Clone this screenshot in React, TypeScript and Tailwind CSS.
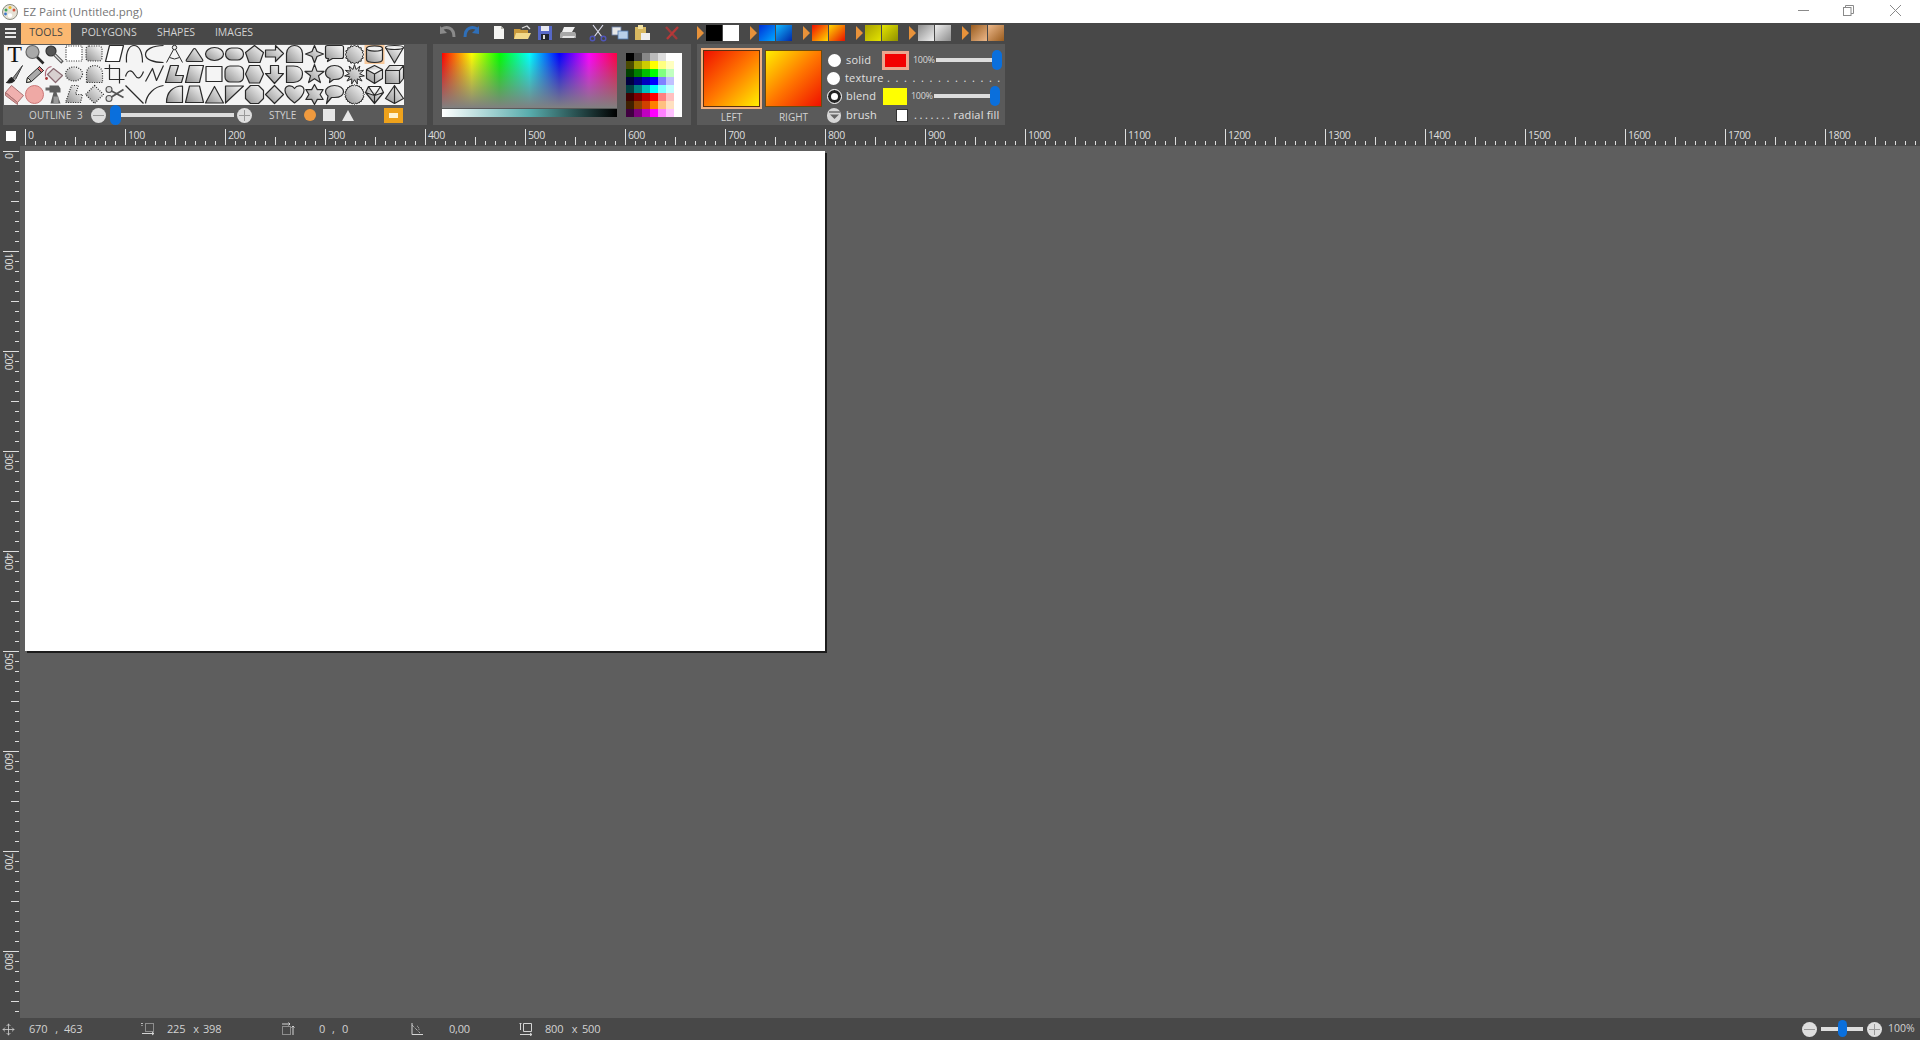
import type { ReactNode } from "react";
import { Move } from "lucide-react";

const star = (n: number, R: number, r: number) => {
  const pts: string[] = [];
  for (let i = 0; i < n * 2; i++) {
    const a = (Math.PI * i) / n - Math.PI / 2;
    const d = i % 2 ? r : R;
    pts.push(`${(10 + d * Math.cos(a)).toFixed(2)},${(10 + d * Math.sin(a)).toFixed(2)}`);
  }
  return pts.join(" ");
};

const G = "url(#sg)";

const P = ({ d, f = G, dash }: { d: string; f?: string; dash?: boolean }) => (
  <path d={d} fill={f} strokeDasharray={dash ? "1 1.4" : undefined} />
);

const shapes: ReactNode[] = [
  // row 1
  <text x="10" y="17.5" fontSize="24" textAnchor="middle" stroke="none" fill="#111" fontFamily="'Liberation Serif', serif">T</text>,
  <g><circle cx="8" cy="7.5" r="6.5" fill="#a9a9a9" stroke="#666" /><path d="M12.5 12.5 L19 19" strokeWidth="2.6" /></g>,
  <g><circle cx="6.5" cy="6.5" r="5" fill="#555" stroke="#333" /><path d="M9.5 9.5 L18 18" stroke="#555" strokeWidth="3.4" /><path d="M10.5 10.5 L17 17" stroke="#ddd" strokeWidth="1.2" /></g>,
  <rect x="1.5" y="1.5" width="16" height="15" fill="#fff" strokeDasharray="1 1.4" />,
  <rect x="1.5" y="1.5" width="16" height="15" rx="3" fill={G} strokeDasharray="1 1.4" />,
  <P d="M1 17 L5 1 H19 L15 17Z" f="#fff" />,
  <P d="M2 18 C1 5 6 1 9.5 1 C14 1 18 6 18 18" f="none" />,
  <P d="M19 1 C8 1 1 5 1 10 C1 15 9 18 19 18" f="none" />,
  <g strokeWidth="1"><circle cx="10" cy="3" r="2.2" fill="#eee" /><path d="M9 5 L2 18 M11 5 L18 18 M5 13 Q10 16 15 13" fill="none" /></g>,
  <P d="M10 4 Q11 4 12 6 L18 15 Q19 17 17 17 H3 Q1 17 2 15 L8 6 Q9 4 10 4Z" />,
  <ellipse cx="10" cy="9.5" rx="9" ry="6.5" fill={G} />,
  <rect x="1" y="3.5" width="18" height="12" rx="6" fill={G} />,
  <P d="M10 1 L19 8 L15.5 18 H4.5 L1 8Z" />,
  <P d="M1 5.5 H11 V1 L19 9 L11 17 V12.5 H1Z" />,
  <P d="M2 18 V9 C2 4 6 1 10 1 C14 1 18 4 18 9 V18Z" />,
  <P d="M10 1 L12.5 7 L19 9.5 L12.5 12 L10 18.5 L7.5 12 L1 9.5 L7.5 7Z" />,
  <P d="M3 1 H17 Q19 1 19 3 V12 Q19 14 17 14 H8 L3 17 L4 14 H3 Q1 14 1 12 V3 Q1 1 3 1Z" />,
  <polygon points={star(16, 9.5, 8)} fill={G} strokeWidth="1" />,
  <g><rect x="0" y="0.5" width="20" height="19" fill="#f8c89a" stroke="none" /><path d="M2 4 V15 C2 19 18 19 18 15 V4" fill={G} /><ellipse cx="10" cy="4" rx="8" ry="2.6" fill="#f1f1f1" /></g>,
  <g><path d="M1 3 L10 18.5 L19 3" fill={G} /><ellipse cx="10" cy="3" rx="9" ry="2" fill="#eee" /></g>,
  // row 2
  <g><path d="M8 14 L18 1 L11 15" fill="#888" stroke="#444" strokeWidth="1" /><path d="M2 18 C4 18 4 14 7 13 L10 16 C8 18 5 19 2 18Z" fill="#222" /></g>,
  <g strokeWidth="1"><path d="M2 18 L3 13 L15 2 L19 6 L7 17Z" fill="#aaa" /><path d="M15 2 L19 6 L17 8 L13 4Z" fill="#d77" /><path d="M2 18 L3 13 L7 17Z" fill="#eed" /></g>,
  <g stroke="#8a6a72" strokeWidth="1.2"><path d="M9 4 L18 11 L11 18 L3 10Z" fill="#d8d0d0" /><path d="M1 12 V8 Q2 3 7 2" fill="none" stroke="#b06a7a" /><circle cx="2" cy="14" r="1.4" fill="#a33" stroke="none" /></g>,
  <ellipse cx="9.5" cy="9.5" rx="8.5" ry="7" fill={G} strokeDasharray="1 1.4" />,
  <P d="M2 18 V9 C2 4 6 1 10 1 C14 1 18 4 18 9 V18Z" dash />,
  <P d="M5 0 V15 H20 M0 4 H15 V19" f="none" />,
  <P d="M1 12 C3 5 7 5 10 10 S16 15 19 7" f="none" />,
  <P d="M1 17 L8 4 L12 16 L19 1" f="none" />,
  <P d="M6 1 H14 L11 11 H19 L17 18 H1Z" />,
  <P d="M5 1 H19 L15 18 H1Z" />,
  <rect x="1.5" y="2" width="16" height="15" fill="#f4f4f4" />,
  <rect x="0.5" y="1.5" width="18.5" height="16" rx="5" fill={G} />,
  <P d="M5 1 H15 L19 9.5 L15 18.5 H5 L1 9.5Z" />,
  <P d="M6 1 H14 V9 H19 L10 19 L1 9 H6Z" />,
  <P d="M2 1.5 H9 C15 1.5 18 5 18 9.5 C18 14 15 18 9 18 H2Z" />,
  <polygon points={star(5, 10, 4.2)} fill={G} />,
  <P d="M10 1 C15 1 19 4 19 8.5 C19 13 15 15 10 15 L9 15 L5 18 L5.5 14 C3 13 1 11 1 8.5 C1 4 5 1 10 1Z" />,
  <polygon points={star(11, 10, 5.2)} fill={G} strokeWidth="1" />,
  <P d="M10 1 L18 5 V14 L10 19 L2 14 V5Z M2 5 L10 9.5 L18 5 M10 9.5 V19" f={G} />,
  <P d="M5 1 H19 V14 L15 19 H1 V6Z M1 6 H15 V19 M15 6 L19 1" f={G} />,
  // row 3
  <g stroke="#a87070" strokeWidth="1"><path d="M1 8 L7 1 L19 11 L13 18Z" fill="#f0b0ae" /><path d="M1 8 V11 L13 20 V18Z" fill="#dc9a98" /></g>,
  <g stroke="#c77" strokeWidth="1"><circle cx="10" cy="10" r="9" fill="#efa9a5" /></g>,
  <g stroke="none"><rect x="1" y="3" width="5" height="3" fill="#666" /><path d="M5 1 H14 L16 4 V8 H12 L16 19 H6 L9 8 H5Z" fill="#5d5d5d" /><rect x="9" y="12" width="5" height="7" fill="#999" /></g>,
  <P d="M7 1 H14 L11 10 H18 L16 18 H1Z" dash />,
  <P d="M10 1 L19 10 L10 19 L1 10Z" dash />,
  <g stroke="#555" strokeWidth="1.1" fill="#ddd"><circle cx="4.5" cy="5" r="3" /><circle cx="4.5" cy="14" r="3" /><path d="M7 6.5 L19 13 M7 12.5 L19 5" fill="none" strokeWidth="1.8" /></g>,
  <P d="M1 1 L19 19" f="none" />,
  <P d="M1 19 C2 10 10 2 19 1" f="none" />,
  <P d="M2 18 C2 8 8 1.5 18 1.5 V18Z" />,
  <P d="M5 1.5 H15 L19 18 H1Z" />,
  <P d="M10 2 L19 18.5 H1Z" />,
  <P d="M1 1.5 H19 L1 18.5Z" />,
  <P d="M6 1 H14 L19 6 V14 L14 19 H6 L1 14 V6Z" />,
  <P d="M10 1 L19 10 L10 19 L1 10Z" />,
  <P d="M10 18.5 C4 14 0.5 10 0.5 6 C0.5 1 7 -0.5 10 4 C13 -0.5 19.5 1 19.5 6 C19.5 10 16 14 10 18.5Z" />,
  <polygon points={star(6, 10, 5.6)} fill={G} />,
  <P d="M10 1 C15 1 19 3.5 19 7 C19 11 15 13 10 13 L7 13 L2 19 L3.5 11.5 C2 10.5 1 9 1 7 C1 3.5 5 1 10 1Z" />,
  <polygon points={star(24, 9.8, 8.8)} fill={G} strokeWidth="1" />,
  <P d="M4 2 H16 L19 8 L10 19 L1 8Z M1 8 L10 11 L19 8 M4 2 L10 11 L16 2 M10 11 V19" />,
  <P d="M10 1 L19 14 L10 19 L1 14Z M10 1 V19" />,
];

const ShapePalette = () => (
  <svg width="400" height="60" className="block overflow-visible bg-[#f4f4f4]">
    <defs>
      <linearGradient id="sg" x1="0" y1="1" x2="1" y2="0">
        <stop offset="0" stopColor="#8f8f8f" />
        <stop offset="1" stopColor="#ffffff" />
      </linearGradient>
    </defs>
    {shapes.map((s, i) => (
      <g
        key={i}
        transform={`translate(${(i % 20) * 20 + 0.5} ${Math.floor(i / 20) * 20 - 0.5})`}
        stroke="#2a2a2a"
        strokeWidth="1.2"
        strokeLinejoin="round"
        fill="none"
      >
        {s}
      </g>
    ))}
  </svg>
);

const Thumb = ({ className }: { className: string }) => (
  <div className={`absolute rounded-full bg-[#0a6fdc] ${className}`} />
);

const RoundBtn = ({ plus, className }: { plus?: boolean; className?: string }) => (
  <div className={`flex h-[15px] w-[15px] shrink-0 items-center justify-center rounded-full bg-[#dedede] ${className ?? ""}`}>
    <svg width="11" height="11" stroke="#999" strokeWidth="1">
      <path d="M0 5.5 H11" />
      {plus && <path d="M5.5 0 V11" />}
    </svg>
  </div>
);

const ToolIcon = ({ children }: { children: ReactNode }) => (
  <div className="flex h-[20px] w-[20px] items-center justify-center">
    <svg width="18" height="18" viewBox="0 0 18 18">
      {children}
    </svg>
  </div>
);

const presets = [
  ["bg-black", "bg-white"],
  ["bg-[linear-gradient(135deg,#0030d8,#00a8ff)]", "bg-[linear-gradient(135deg,#10b8ff,#0028a8)]"],
  ["bg-[linear-gradient(135deg,#f01000,#ffd800)]", "bg-[linear-gradient(135deg,#ffd800,#e81000)]"],
  ["bg-[linear-gradient(135deg,#a8a000,#e4e400)]", "bg-[linear-gradient(135deg,#e4e400,#909000)]"],
  ["bg-[linear-gradient(135deg,#8c8c8c,#f0f0f0)]", "bg-[linear-gradient(135deg,#f0f0f0,#8c8c8c)]"],
  ["bg-[linear-gradient(135deg,#9a5c1e,#ecb88a)]", "bg-[linear-gradient(135deg,#ecb88a,#9a5c1e)]"],
];

const swatches = [
  ["#000000", "#444444", "#888888", "#bbbbbb", "#dddddd", "#ffffff", "#ffffff"],
  ["#4a4a00", "#a0a000", "#cccc00", "#ffff00", "#ffff80", "#ffffc0", "#ffffff"],
  ["#004000", "#008000", "#00c000", "#00ff00", "#80ff80", "#c0ffc0", "#ffffff"],
  ["#000040", "#000080", "#0000c0", "#0000ff", "#8080ff", "#c0c0ff", "#ffffff"],
  ["#004040", "#008080", "#00c0c0", "#00ffff", "#80ffff", "#c0ffff", "#ffffff"],
  ["#400000", "#800000", "#c00000", "#ff0000", "#ff8080", "#ffc0c0", "#ffffff"],
  ["#402000", "#904000", "#d04000", "#ff8000", "#ffc080", "#ffe0c0", "#ffffff"],
  ["#400040", "#800080", "#c000c0", "#ff00ff", "#ff80ff", "#ffc0ff", "#ffffff"],
];

const TopRuler = () => {
  const ticks = Array.from({ length: 190 }, (_, i) => i * 10);
  return (
    <svg width="1895" height="21" className="block" stroke="#dedede">
      {ticks.map((t) => {
        const top = t % 100 === 0 ? 4 : t % 50 === 0 ? 12 : 16;
        return <line key={t} x1={t + 0.5} x2={t + 0.5} y1={top} y2={20} />;
      })}
      {ticks
        .filter((t) => t % 100 === 0)
        .map((t) => (
          <text key={t} x={t + 3} y={14} fontSize="10.5" letterSpacing="-0.4" fill="#dedede" stroke="none">
            {t}
          </text>
        ))}
    </svg>
  );
};

const LeftRuler = () => {
  const ticks = Array.from({ length: 87 }, (_, i) => i * 10);
  return (
    <svg width="20" height="867" className="block" stroke="#dedede">
      {ticks.map((t) => {
        const left = t % 100 === 0 ? 3 : t % 50 === 0 ? 11 : 15;
        return <line key={t} y1={t + 0.5} y2={t + 0.5} x1={left} x2={19} />;
      })}
      {ticks
        .filter((t) => t % 100 === 0)
        .map((t) => (
          <text key={t} transform={`translate(5 ${t + 2}) rotate(90)`} fontSize="10.5" letterSpacing="-0.4" fill="#dedede" stroke="none">
            {t}
          </text>
        ))}
    </svg>
  );
};

const Radio = ({ on }: { on?: boolean }) => (
  <div className={`h-[13px] w-[13px] rounded-full bg-white ${on ? "border-[3px] border-[#222] outline outline-1 outline-white" : ""}`} />
);

const OptLabel = ({ children, w }: { children: ReactNode; w: string }) => (
  <span className={`ml-[5px] tracking-[0.2px] ${w}`}>{children}</span>
);

const Slider = () => (
  <>
    <span className="ml-[4px] w-[23px] text-[9px] tracking-[-0.3px] text-[#d8d8d8]">100%</span>
    <div className="relative h-[4px] w-[56px] bg-[#dddddd]">
      <Thumb className="left-[56px] top-[-8px] h-[20px] w-[10px]" />
    </div>
  </>
);

const StatusIcon = ({ children }: { children: ReactNode }) => (
  <svg width="14" height="14" viewBox="0 0 14 14" fill="none" stroke="#d4d4d4" strokeWidth="1" className="shrink-0">
    {children}
  </svg>
);

export default function App() {
  return (
    <div className="flex h-[1040px] w-full flex-col overflow-hidden bg-[#5e5e5e] font-['Open_Sans',sans-serif] text-[#d2d2d2]">
      {/* title bar */}
      <div className="flex h-[23px] shrink-0 items-center bg-white">
        <svg width="18" height="18" viewBox="0 0 18 18" className="ml-[1px]">
          <circle cx="9" cy="9" r="7.5" fill="#e6e2d6" stroke="#8c8c80" />
          <circle cx="9" cy="12.5" r="2.2" fill="#fff" />
          <circle cx="5" cy="7" r="1.5" fill="#3aa655" />
          <circle cx="9" cy="4.5" r="1.5" fill="#e5b82e" />
          <circle cx="13" cy="7" r="1.5" fill="#d2503c" />
          <circle cx="4.5" cy="11" r="1.4" fill="#3c76c8" />
        </svg>
        <span className="ml-[4px] text-[11.5px] text-[#777777]">EZ Paint (Untitled.png)</span>
        <div className="ml-auto flex h-full items-center pb-[3px]">
          <svg width="11" height="11" stroke="#8a8a8a" className="mr-[34px]"><path d="M0 5.5 H11" /></svg>
          <svg width="11" height="11" fill="none" stroke="#8a8a8a" className="mr-[36px]">
            <rect x="0.5" y="2.5" width="7.5" height="8" />
            <path d="M2.5 2.5 V0.5 H10.5 V8.5 H8" />
          </svg>
          <svg width="11" height="11" stroke="#8a8a8a" className="mr-[19px]"><path d="M0 0 L11 11 M11 0 L0 11" /></svg>
        </div>
      </div>

      {/* menu + quick tools */}
      <div className="flex h-[21px] shrink-0 items-center bg-[#484848] text-[11px]">
        <div className="mb-[2px] ml-[5px] flex h-[10px] w-[11px] flex-col justify-between">
          <div className="h-[2px] bg-[#e8e8e8]" />
          <div className="h-[2px] bg-[#e8e8e8]" />
          <div className="h-[2px] bg-[#e8e8e8]" />
        </div>
        <div className="ml-[5px] flex h-full w-[50px] items-center justify-center bg-[#fbb871] pb-[2px] text-[10.5px] text-[#444444]">TOOLS</div>
        <div className="flex h-full w-[76px] items-center justify-center pb-[2px] text-[10.5px]">POLYGONS</div>
        <div className="flex h-full w-[58px] items-center justify-center pb-[2px] text-[10.5px]">SHAPES</div>
        <div className="flex h-full w-[58px] items-center justify-center pb-[2px] text-[10.5px]">IMAGES</div>

        <div className="mb-[2px] ml-[175px] flex gap-[3px]">
          <ToolIcon>
            <path d="M3 5 C7 2 15 3 15 13" fill="none" stroke="#8a8a8a" strokeWidth="3" />
            <path d="M1 2 V10 L8 9Z" fill="#8a8a8a" />
          </ToolIcon>
          <ToolIcon>
            <path d="M15 5 C11 2 3 3 3 13" fill="none" stroke="#2f6fb8" strokeWidth="3" />
            <path d="M17 2 V10 L10 9Z" fill="#2f6fb8" />
          </ToolIcon>
        </div>
        <div className="mb-[2px] ml-[8px] flex gap-[3px]">
          <ToolIcon>
            <path d="M4 2 H11 L14 5 V15 H4Z" fill="#f4f4f2" />
            <path d="M11 2 V5 H14Z" fill="#b9b9b0" />
          </ToolIcon>
          <ToolIcon>
            <path d="M1 5 H7 L8 6 H15 V15 H1Z" fill="#c99a3c" />
            <path d="M3 9 H18 L15 15 H1Z" fill="#f2d98a" />
            <path d="M9 4 L14 2 L17 5" fill="none" stroke="#ddd" strokeWidth="1.3" />
          </ToolIcon>
          <ToolIcon>
            <rect x="2" y="2" width="14" height="14" fill="#5668c8" />
            <rect x="5" y="2" width="8" height="5" fill="#e8e8f0" />
            <rect x="5" y="10" width="8" height="6" fill="#20242e" />
            <rect x="7" y="11" width="2" height="4" fill="#ddd" />
          </ToolIcon>
          <ToolIcon>
            <path d="M5 3 H16 L13 8 H3Z" fill="#f0f0f0" />
            <path d="M2 8 H16 L17 10 V14 H1 V10Z" fill="#a8a8a8" />
            <path d="M3 14 H15 L16 12 H4Z" fill="#e4e4e4" />
          </ToolIcon>
        </div>
        <div className="mb-[2px] ml-[10px] flex gap-[2px]">
          <ToolIcon>
            <path d="M4 1 L13 13 M14 1 L5 13" stroke="#dcdcec" strokeWidth="1.2" />
            <circle cx="3.5" cy="14.5" r="2.3" fill="none" stroke="#4f55b8" strokeWidth="1.4" />
            <circle cx="14.5" cy="14.5" r="2.3" fill="none" stroke="#4f55b8" strokeWidth="1.4" />
          </ToolIcon>
          <ToolIcon>
            <rect x="1" y="3" width="9" height="8" fill="#e8e8e8" stroke="#6a7fa8" strokeWidth="0.8" />
            <rect x="7" y="7" width="10" height="8" fill="#b8cfe8" stroke="#4f78b0" strokeWidth="0.8" />
          </ToolIcon>
          <ToolIcon>
            <rect x="2" y="3" width="11" height="13" fill="#d8b860" />
            <rect x="5" y="1" width="5" height="4" fill="#f0e0a0" />
            <rect x="8" y="9" width="9" height="7" fill="#eeeeee" />
          </ToolIcon>
        </div>
        <div className="mb-[2px] ml-[10px]">
          <ToolIcon>
            <path d="M3 3 L14 15" stroke="#a03a3a" strokeWidth="2.4" />
            <path d="M15 3 L4 15" stroke="#b83838" strokeWidth="2.4" />
          </ToolIcon>
        </div>
        <div className="mb-[2px] ml-[15px] flex gap-[11px]">
          {presets.map(([a, b], i) => (
            <div key={i} className="flex items-center">
              <div className="h-0 w-0 border-y-[7px] border-l-[7px] border-y-transparent border-l-[#e8923a]" />
              <div className={`ml-[2px] h-[16px] w-[16px] ${a}`} />
              <div className={`ml-[1px] h-[16px] w-[16px] ${b}`} />
            </div>
          ))}
        </div>
      </div>

      {/* panels */}
      <div className="flex h-[81px] shrink-0 bg-[#484848]">
        <div className="ml-[3px] w-[424px] shrink-0 bg-[#5a5a5a] pl-[1px] pt-[1px]">
          <ShapePalette />
          <div className="flex h-[20px] items-center text-[10px]">
            <span className="ml-[25px] w-[48px] tracking-[0.1px]">OUTLINE</span>
            <span className="w-[14px]">3</span>
            <RoundBtn />
            <div className="relative ml-[6px] h-[4px] w-[122px] bg-[#dddddd]">
              <Thumb className="left-[-2px] top-[-8px] h-[20px] w-[11px]" />
            </div>
            <RoundBtn plus className="ml-[3px]" />
            <span className="ml-[17px] w-[35px]">STYLE</span>
            <div className="h-[12px] w-[12px] rounded-full bg-[#f09a3e]" />
            <div className="ml-[7px] h-[12px] w-[12px] bg-[#e6e6e6]" />
            <div className="ml-[7px] h-0 w-0 border-x-[6px] border-b-[11px] border-x-transparent border-b-[#e6e6e6]" />
            <div className="ml-[30px] flex h-[15px] w-[19px] items-center justify-center bg-[#eea21c]">
              <div className="h-[5px] w-[9px] bg-[#fff3d0]" />
            </div>
          </div>
        </div>

        <div className="ml-[6px] flex w-[258px] shrink-0 bg-[#5a5a5a] pl-[9px] pt-[9px]">
          <div className="w-[175px]">
            <div className="h-[55px] [background-image:linear-gradient(to_bottom,transparent,#808080),linear-gradient(to_right,#ff0000,#ffff00_17%,#00ff00_33%,#00ffff_50%,#0000ff_67%,#ff00ff_84%,#ff0040)]" />
            <div className="mt-[1px] h-[8px] bg-[linear-gradient(to_right,#ffffff,#58acac_50%,#000000)]" />
          </div>
          <div className="ml-[9px] grid h-[64px] w-[56px] grid-cols-7">
            {swatches.flat().map((c, i) => (
              <div key={i} style={{ backgroundColor: c }} />
            ))}
          </div>
        </div>

        <div className="ml-[6px] flex w-[308px] shrink-0 bg-[#5a5a5a] pl-[4px] pt-[4px]">
          <div className="mr-[3px] flex w-[61px] shrink-0 flex-col items-center">
            <div className="h-[61px] w-[61px] shrink-0 border-[2px] border-[#f0b080]">
              <div className="h-full w-full border border-[#5a3010] bg-[linear-gradient(135deg,#f01000,#ff7800_50%,#ffee00)]" />
            </div>
            <span className="mt-[1px] text-[10px]">LEFT</span>
          </div>
          <div className="flex w-[57px] shrink-0 flex-col items-center pt-[2px]">
            <div className="h-[57px] w-[57px] shrink-0 border border-[#6a4a10] bg-[linear-gradient(135deg,#ffee00,#ff7800_50%,#f01000)]" />
            <span className="mt-[3px] text-[10px]">RIGHT</span>
          </div>
          <div className="ml-[5px] flex w-[178px] shrink-0 flex-col pt-[3px] text-[11px] text-[#e0e0e0]">
            <div className="flex h-[18px] items-center">
              <div className="flex w-[14px] justify-center"><Radio /></div>
              <OptLabel w="w-[36px]">solid</OptLabel>
              <div className="h-[19px] w-[27px] border-[3px] border-[#eca58e] bg-[#f20000]" />
              <Slider />
            </div>
            <div className="flex h-[18px] items-center">
              <div className="flex w-[14px] justify-center"><Radio /></div>
              <OptLabel w="w-[38px]">texture</OptLabel>
              <span className="ml-[4px] whitespace-nowrap tracking-[5.6px]">..............</span>
            </div>
            <div className="flex h-[18px] items-center">
              <div className="flex w-[14px] justify-center"><Radio on /></div>
              <OptLabel w="w-[37px]">blend</OptLabel>
              <div className="h-[17px] w-[24px] bg-[#ffff00]" />
              <Slider />
            </div>
            <div className="mt-[1px] flex h-[18px] items-center">
              <div className="flex w-[14px] justify-center">
                <div className="flex h-[15px] w-[15px] items-center justify-center rounded-full bg-[#d6d6d6]">
                  <svg width="11" height="9" viewBox="0 0 11 9">
                    <path d="M0 1 H11" stroke="#666" strokeWidth="1.4" />
                    <path d="M1 3.5 H10 L5.5 8Z" fill="#666" />
                  </svg>
                </div>
              </div>
              <OptLabel w="w-[50px]">brush</OptLabel>
              <div className="h-[13px] w-[12px] border border-[#333] bg-white" />
              <span className="ml-[6px] tracking-[2.6px]">.......</span>
              <span className="ml-[1px] tracking-[0.2px]">radial fill</span>
            </div>
          </div>
        </div>
      </div>

      {/* top ruler */}
      <div className="flex h-[21px] shrink-0 bg-[#484848]">
        <div className="flex w-[25px] items-center pl-[6px]">
          <div className="h-[10px] w-[10px] bg-white" />
        </div>
        <TopRuler />
      </div>

      {/* canvas area */}
      <div className="flex min-h-0 flex-1">
        <div className="w-[20px] shrink-0 overflow-hidden bg-[#484848] pt-[5px]">
          <LeftRuler />
        </div>
        <div className="pl-[5px] pt-[5px]">
          <div className="h-[500px] w-[800px] bg-white shadow-[2px_2px_0_#1c1c1c]" />
        </div>
      </div>

      {/* status bar */}
      <div className="flex h-[22px] shrink-0 items-center bg-[#484848] text-[11px] tracking-[-0.2px]">
        <Move size={13} strokeWidth={1.5} className="ml-[2px] shrink-0" />
        <span className="ml-[14px] w-[20px]">670</span>
        <span className="w-[15px] text-center">,</span>
        <span className="w-[77px]">463</span>
        <StatusIcon>
          <path d="M1 1 V5 M0 2 L1 1 L2 2 M4.5 1.5 H12.5 V9.5 H4.5Z" strokeDasharray="1 1" />
          <path d="M1 11.5 H13 M11 10 L13 11.5 L11 13" />
        </StatusIcon>
        <span className="ml-[12px] w-[22px]">225</span>
        <span className="w-[14px] text-center">x</span>
        <span className="w-[78px]">398</span>
        <StatusIcon>
          <path d="M1.5 4.5 H9.5 V12.5 H1.5Z" strokeDasharray="1 1" />
          <path d="M1 2 H9 M7.5 0.5 L9 2 L7.5 3.5 M12 13 V4 M10.5 5.5 L12 4 L13.5 5.5" />
        </StatusIcon>
        <span className="ml-[24px] w-[13px]">0</span>
        <span className="w-[10px]">,</span>
        <span className="w-[68px]">0</span>
        <StatusIcon>
          <path d="M2 1 V12.5 H13" />
          <path d="M2 3 L10 11 M7 4 Q9 5 9 8" strokeDasharray="1 1" />
        </StatusIcon>
        <span className="ml-[25px] w-[70px]">0,00</span>
        <StatusIcon>
          <path d="M4.5 1.5 H12.5 V9.5 H4.5Z M1.5 1 V8 M0.5 2 L1.5 1 L2.5 2 M1 12.5 H13 M11 11 L13 12.5 L11 14" />
        </StatusIcon>
        <span className="ml-[12px] w-[22px]">800</span>
        <span className="w-[15px] text-center">x</span>
        <span>500</span>
        <div className="ml-auto flex items-center">
          <RoundBtn />
          <div className="relative ml-[4px] h-[4px] w-[42px] bg-[#dddddd]">
            <Thumb className="left-[17px] top-[-7px] h-[17px] w-[9px]" />
          </div>
          <RoundBtn plus className="ml-[4px]" />
          <span className="ml-[6px] mr-[6px] w-[26px] text-[10.5px] tracking-normal">100%</span>
        </div>
      </div>
    </div>
  );
}
